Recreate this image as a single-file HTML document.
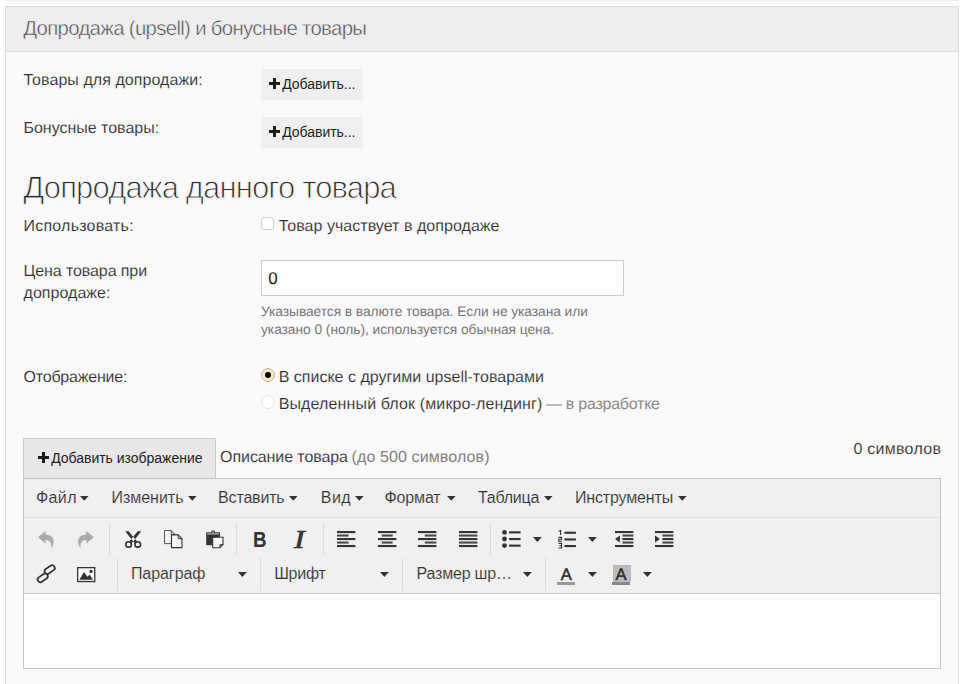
<!DOCTYPE html>
<html lang="ru">
<head>
<meta charset="utf-8">
<title>Допродажа (upsell) и бонусные товары</title>
<style>
html,body{margin:0;padding:0;background:#fff;}
body{width:965px;height:684px;position:relative;overflow:hidden;font-family:"Liberation Sans",sans-serif;}
.abs{position:absolute;box-sizing:border-box;}
.t{position:absolute;white-space:pre;line-height:20px;font-family:"Liberation Sans",sans-serif;}
.g{text-rendering:geometricPrecision;}
.panel{left:5px;top:6px;width:954px;height:700px;background:#fafafa;border:1px solid #ddd;}
.phead{left:5px;top:6px;width:954px;height:46px;background:#eee;border:1px solid #ddd;}
.btn{background:#efefef;}
.sep{width:1px;background:#dcdcdc;}
.caret{width:0;height:0;border-left:4px solid transparent;border-right:4px solid transparent;border-top:4px solid #333;}
svg{position:absolute;overflow:visible;}
</style>
</head>
<body>
<div class="abs" style="left:5px;top:0;width:954px;height:1px;background:#eee"></div>
<div class="abs panel"></div>
<div class="abs phead"></div>

<div class="abs btn" style="left:261px;top:69px;width:102px;height:31px"></div>
<div class="abs btn" style="left:261px;top:117px;width:102px;height:31px"></div>
<svg style="left:269px;top:78px" width="11" height="11" viewBox="0 0 11 11"><path d="M4 0h3v4h4v3H7v4H4V7H0V4h4z" fill="#1a1a1a"/></svg>
<svg style="left:269px;top:126px" width="11" height="11" viewBox="0 0 11 11"><path d="M4 0h3v4h4v3H7v4H4V7H0V4h4z" fill="#1a1a1a"/></svg>

<!-- checkbox -->
<div class="abs" style="left:261px;top:217px;width:13.4px;height:13.4px;border:1px solid #d0d0d0;border-radius:3px;background:#fff"></div>
<!-- input -->
<div class="abs" style="left:261px;top:260px;width:363px;height:36px;border:1px solid #ccc;background:#fff"></div>
<!-- radios -->
<div class="abs" style="left:261px;top:367.9px;width:14.1px;height:14.1px;border-radius:50%;border:1px solid #c4b89c;background:#f7e8c4"></div>
<div class="abs" style="left:264.7px;top:371.6px;width:6.6px;height:6.6px;border-radius:50%;background:#050505"></div>
<div class="abs" style="left:261px;top:394.8px;width:14.1px;height:14.1px;border-radius:50%;border:1px solid #e6e6e6;background:#fff"></div>

<!-- add image button -->
<div class="abs" style="left:23px;top:438px;width:193px;height:41px;border:1px solid #ccc;background:#e8e8e8"></div>
<svg style="left:37.8px;top:452.4px" width="11" height="11" viewBox="0 0 11 11"><path d="M4 0h3v4h4v3H7v4H4V7H0V4h4z" fill="#1a1a1a"/></svg>

<!-- editor -->
<div class="abs" style="left:23px;top:478px;width:918px;height:191px;border:1px solid #c5c5c5;background:#fff"></div>
<div class="abs" style="left:24px;top:479px;width:916px;height:39px;background:#f0f0f0;border-bottom:1px solid #e0e0e0"></div>
<div class="abs" style="left:24px;top:518px;width:916px;height:76px;background:#f0f0f0;border-bottom:1px solid #c5c5c5"></div>


<!-- menu carets -->
<svg style="left:80.4px;top:496.2px" width="8.6" height="4.8" viewBox="0 0 8.6 4.6"><path d="M0 0h8.6L4.3 4.6z" fill="#333"/></svg>
<svg style="left:188px;top:496.2px" width="8.6" height="4.8" viewBox="0 0 8.6 4.6"><path d="M0 0h8.6L4.3 4.6z" fill="#333"/></svg>
<svg style="left:289px;top:496.2px" width="8.6" height="4.8" viewBox="0 0 8.6 4.6"><path d="M0 0h8.6L4.3 4.6z" fill="#333"/></svg>
<svg style="left:355px;top:496.2px" width="8.6" height="4.8" viewBox="0 0 8.6 4.6"><path d="M0 0h8.6L4.3 4.6z" fill="#333"/></svg>
<svg style="left:446.6px;top:496.2px" width="8.6" height="4.8" viewBox="0 0 8.6 4.6"><path d="M0 0h8.6L4.3 4.6z" fill="#333"/></svg>
<svg style="left:543.6px;top:496.2px" width="8.6" height="4.8" viewBox="0 0 8.6 4.6"><path d="M0 0h8.6L4.3 4.6z" fill="#333"/></svg>
<svg style="left:677.5px;top:496.2px" width="8.6" height="4.8" viewBox="0 0 8.6 4.6"><path d="M0 0h8.6L4.3 4.6z" fill="#333"/></svg>

<!-- toolbar separators -->
<div class="abs sep" style="left:109px;top:523px;height:33px"></div>
<div class="abs sep" style="left:236px;top:523px;height:33px"></div>
<div class="abs sep" style="left:323px;top:523px;height:33px"></div>
<div class="abs sep" style="left:490px;top:523px;height:33px"></div>
<div class="abs sep" style="left:117px;top:558px;height:33px"></div>
<div class="abs sep" style="left:260px;top:558px;height:33px"></div>
<div class="abs sep" style="left:402px;top:558px;height:33px"></div>
<div class="abs sep" style="left:545px;top:558px;height:33px"></div>

<!-- toolbar carets -->
<svg style="left:533.3px;top:537px" width="8.8" height="4.9" viewBox="0 0 8.8 4.9"><path d="M0 0h8.8L4.4 4.9z" fill="#333"/></svg>
<svg style="left:588.2px;top:537px" width="8.8" height="4.9" viewBox="0 0 8.8 4.9"><path d="M0 0h8.8L4.4 4.9z" fill="#333"/></svg>
<svg style="left:237.6px;top:571.8px" width="8.8" height="4.9" viewBox="0 0 8.8 4.9"><path d="M0 0h8.8L4.4 4.9z" fill="#333"/></svg>
<svg style="left:380.3px;top:571.8px" width="8.8" height="4.9" viewBox="0 0 8.8 4.9"><path d="M0 0h8.8L4.4 4.9z" fill="#333"/></svg>
<svg style="left:523.3px;top:571.8px" width="8.8" height="4.9" viewBox="0 0 8.8 4.9"><path d="M0 0h8.8L4.4 4.9z" fill="#333"/></svg>
<svg style="left:588.2px;top:571.8px" width="8.8" height="4.9" viewBox="0 0 8.8 4.9"><path d="M0 0h8.8L4.4 4.9z" fill="#333"/></svg>
<svg style="left:643.2px;top:571.8px" width="8.8" height="4.9" viewBox="0 0 8.8 4.9"><path d="M0 0h8.8L4.4 4.9z" fill="#333"/></svg>

<!-- undo / redo -->
<svg style="left:38px;top:530.5px" width="16" height="18" viewBox="0 0 16 18"><path d="M0 6.3 L7.6 0 V3.6 C12.4 3.6 15.7 6.6 15.7 10.6 C15.7 13.2 14.6 15.6 13 17.4 C13.6 15.2 13.5 12.9 12.3 11.3 C11.2 9.6 9.6 8.9 7.6 8.8 V12.4 Z" fill="#aaa"/></svg>
<svg style="left:78.3px;top:530.5px" width="16" height="18" viewBox="0 0 16 18"><path transform="translate(15.8 0) scale(-1 1)" d="M0 6.3 L7.6 0 V3.6 C12.4 3.6 15.7 6.6 15.7 10.6 C15.7 13.2 14.6 15.6 13 17.4 C13.6 15.2 13.5 12.9 12.3 11.3 C11.2 9.6 9.6 8.9 7.6 8.8 V12.4 Z" fill="#aaa"/></svg>

<!-- cut -->
<svg style="left:124.5px;top:531.3px" width="16.4" height="17" viewBox="0 0 16.4 17">
<path d="M0.2 0.2 L3.6 0.2 L12.2 10.6 L10 12.2 L7.4 9.4 Z M16.2 0.2 L12.8 0.2 L4.2 10.6 L6.4 12.2 L9 9.4 Z" fill="#333"/>
<ellipse cx="3.6" cy="13.4" rx="2.8" ry="2.7" fill="none" stroke="#333" stroke-width="1.6"/>
<ellipse cx="12.8" cy="13.4" rx="2.8" ry="2.7" fill="none" stroke="#333" stroke-width="1.6"/>
</svg>

<!-- copy -->
<svg style="left:164px;top:530px" width="19" height="18.5" viewBox="0 0 19 18.5">
<path d="M0.5 0.5 H7.2 L11 4.3 V13.6 H0.5 Z" fill="#f4f4f4" stroke="#555" stroke-width="1"/>
<path d="M7.2 0.5 V4.3 H11" fill="none" stroke="#555" stroke-width="1"/>
<path d="M7.5 4.9 H14.2 L18 8.7 V17.6 H7.5 Z" fill="#fafafa" stroke="#333" stroke-width="1.1"/>
<path d="M14.2 4.9 V8.7 H18" fill="none" stroke="#333" stroke-width="1"/>
</svg>

<!-- paste -->
<svg style="left:205.5px;top:530px" width="18" height="18.5" viewBox="0 0 18 18.5">
<rect x="0.2" y="2.2" width="13.8" height="13" fill="#333"/>
<path d="M1.2 2.6 H13 V4.6 H1.2 Z" fill="#999"/>
<path d="M5.6 2.4 C5.6 0.2 8.6 0.2 8.6 2.4" fill="none" stroke="#333" stroke-width="1.1"/>
<path d="M6.7 7.2 H17 V14.6 L13.9 17.7 H6.7 Z" fill="#fafafa" stroke="#333" stroke-width="1.1"/>
<path d="M17 14.6 H13.9 V17.7" fill="none" stroke="#333" stroke-width="1"/>
</svg>

<!-- align left -->
<svg style="left:337.2px;top:531px" width="18.4" height="16.2" viewBox="0 0 18.4 16.2">
<g fill="#333"><rect x="0" y="0" width="18.4" height="2.1"/><rect x="0" y="7" width="18.4" height="2.1"/><rect x="0" y="14" width="18.4" height="2.1"/></g>
<g fill="#4a4a4a"><rect x="0" y="3.5" width="11.6" height="2.1"/><rect x="0" y="10.5" width="11.6" height="2.1"/></g>
</svg>
<!-- align center -->
<svg style="left:377.7px;top:531px" width="18.4" height="16.2" viewBox="0 0 18.4 16.2">
<g fill="#333"><rect x="0" y="0" width="18.4" height="2.1"/><rect x="0" y="7" width="18.4" height="2.1"/><rect x="0" y="14" width="18.4" height="2.1"/></g>
<g fill="#4a4a4a"><rect x="3.7" y="3.5" width="11" height="2.1"/><rect x="3.7" y="10.5" width="11" height="2.1"/></g>
</svg>
<!-- align right -->
<svg style="left:418.2px;top:531px" width="18.4" height="16.2" viewBox="0 0 18.4 16.2">
<g fill="#333"><rect x="0" y="0" width="18.4" height="2.1"/><rect x="0" y="7" width="18.4" height="2.1"/><rect x="0" y="14" width="18.4" height="2.1"/></g>
<g fill="#4a4a4a"><rect x="6.8" y="3.5" width="11.6" height="2.1"/><rect x="6.8" y="10.5" width="11.6" height="2.1"/></g>
</svg>
<!-- justify -->
<svg style="left:458.7px;top:531px" width="18.4" height="16.2" viewBox="0 0 18.4 16.2">
<g fill="#333"><rect x="0" y="0" width="18.4" height="2.1"/><rect x="0" y="7" width="18.4" height="2.1"/><rect x="0" y="14" width="18.4" height="2.1"/></g>
<g fill="#4a4a4a"><rect x="0" y="3.5" width="18.4" height="2.1"/><rect x="0" y="10.5" width="18.4" height="2.1"/></g>
</svg>

<!-- bullet list -->
<svg style="left:502.3px;top:530px" width="18.6" height="18" viewBox="0 0 18.6 18">
<g fill="#333"><circle cx="2.5" cy="2.4" r="2.4"/><circle cx="2.5" cy="9" r="2.4"/><circle cx="2.5" cy="15.6" r="2.4"/>
<rect x="7" y="1.3" width="11.6" height="2.1"/><rect x="7" y="8" width="11.6" height="2.1"/><rect x="7" y="14.6" width="11.6" height="2.1"/></g>
</svg>
<!-- numbered list -->
<svg style="left:558.2px;top:529.6px" width="18" height="19" viewBox="0 0 18 19">
<g fill="#333"><rect x="6.4" y="1.7" width="11.5" height="2.1"/><rect x="6.4" y="8.4" width="11.5" height="2.1"/><rect x="6.4" y="15" width="11.5" height="2.1"/></g>
<g fill="none" stroke="#333" stroke-width="1.1"><path d="M0.6 1.2 L2.6 0.6 V5"/><path d="M0.5 7.4 H3.6 V9.2 H0.8 V11.2 H4"/><path d="M0.5 13.4 H3.6 V18 H0.5 M1.4 15.7 H3.6"/></g>
</svg>
<!-- outdent -->
<svg style="left:614.9px;top:531px" width="18.4" height="16.2" viewBox="0 0 18.4 16.2">
<g fill="#333"><rect x="0" y="0" width="18.4" height="2.1"/><rect x="0" y="14" width="18.4" height="2.1"/><rect x="7.4" y="7" width="11" height="2.1"/><path d="M4.9 4.6 V11.6 L0 8.1 Z"/></g>
<g fill="#4a4a4a"><rect x="7.4" y="3.5" width="11" height="2.1"/><rect x="7.4" y="10.5" width="11" height="2.1"/></g>
</svg>
<!-- indent -->
<svg style="left:655.3px;top:531px" width="18.4" height="16.2" viewBox="0 0 18.4 16.2">
<g fill="#333"><rect x="0" y="0" width="18.4" height="2.1"/><rect x="0" y="14" width="18.4" height="2.1"/><rect x="7.4" y="7" width="11" height="2.1"/><path d="M0 4.6 V11.6 L4.9 8.1 Z"/></g>
<g fill="#4a4a4a"><rect x="7.4" y="3.5" width="11" height="2.1"/><rect x="7.4" y="10.5" width="11" height="2.1"/></g>
</svg>

<!-- link -->
<svg style="left:0px;top:0px" width="100" height="600" viewBox="0 0 100 600">
<g fill="none" stroke="#333" stroke-width="1.7">
<rect transform="translate(49.7 569.6) rotate(-35)" x="-5.6" y="-2.7" width="11.2" height="5.4" rx="2.7"/>
<rect transform="translate(42.7 577.9) rotate(-35)" x="-5.6" y="-2.7" width="11.2" height="5.4" rx="2.7"/>
</g>
</svg>
<!-- image -->
<svg style="left:77px;top:567px" width="18.4" height="15.2" viewBox="0 0 18.4 15.2">
<rect x="0.65" y="0.65" width="17.1" height="13.9" fill="#fafafa" stroke="#333" stroke-width="1.3"/>
<path d="M2.4 12.8 L6.9 4.9 L10.5 9.8 L12.6 7.6 L16 12.8 Z" fill="#333"/>
<circle cx="14" cy="4.4" r="1.6" fill="#333"/>
</svg>

<!-- text color -->
<div class="abs" style="left:557px;top:582px;width:18px;height:3px;background:#999"></div>
<!-- bg color -->
<div class="abs" style="left:613px;top:565px;width:18px;height:17.4px;background:#bbb"></div>
<div class="abs" style="left:612px;top:582.3px;width:18px;height:2.8px;background:#888"></div>

<!-- bold / italic -->
<div class="t" id="icoB" style="left:252.9px;top:525.2px;line-height:28px;font-size:22.9px;font-weight:700;color:#333;transform-origin:0 0;transform:scaleX(0.82)">B</div>
<div class="t" id="icoI" style="left:293.8px;top:524.9px;line-height:30px;font-family:'Liberation Serif',serif;font-size:25px;font-weight:400;font-style:italic;color:#333;-webkit-text-stroke:0.55px #333;transform-origin:0 0;transform:scaleX(1.28)">I</div>

<div class="t g" style="left:23.2px;top:18.8px;font-size:20.4px;color:#454545;letter-spacing:-0.688px;font-weight:400;-webkit-text-stroke:0.5px #eee">Допродажа (upsell) и бонусные товары</div>
<div class="t g" style="left:23.5px;top:70.8px;font-size:16px;color:#2e2e2e;letter-spacing:0.063px;font-weight:400;-webkit-text-stroke:0.12px #fafafa">Товары для допродажи:</div>
<div class="t g" style="left:23.5px;top:118.7px;font-size:16px;color:#2e2e2e;letter-spacing:-0.016px;font-weight:400;-webkit-text-stroke:0.12px #fafafa">Бонусные товары:</div>
<div class="t" style="left:282.2px;top:74.0px;font-size:14px;color:#222;letter-spacing:-0.025px;font-weight:400;">Добавить...</div>
<div class="t" style="left:282.2px;top:122.0px;font-size:14px;color:#222;letter-spacing:-0.025px;font-weight:400;">Добавить...</div>
<div class="t g" style="left:23.3px;top:177.9px;font-size:31px;color:#2c2c2c;letter-spacing:-0.861px;font-weight:400;-webkit-text-stroke:0.9px #fafafa">Допродажа данного товара</div>
<div class="t g" style="left:23.5px;top:216.8px;font-size:16px;color:#2e2e2e;letter-spacing:0.223px;font-weight:400;-webkit-text-stroke:0.12px #fafafa">Использовать:</div>
<div class="t g" style="left:278.7px;top:216.8px;font-size:16px;color:#2e2e2e;letter-spacing:0.039px;font-weight:400;-webkit-text-stroke:0.12px #fafafa">Товар участвует в допродаже</div>
<div class="t g" style="left:23.5px;top:262.2px;font-size:16px;color:#2e2e2e;letter-spacing:-0.094px;font-weight:400;-webkit-text-stroke:0.12px #fafafa">Цена товара при</div>
<div class="t g" style="left:23.5px;top:284.2px;font-size:16px;color:#2e2e2e;letter-spacing:0.042px;font-weight:400;-webkit-text-stroke:0.12px #fafafa">допродаже:</div>
<div class="t g" style="left:268.3px;top:269.3px;font-size:17px;color:#222;letter-spacing:0.000px;font-weight:400;">0</div>
<div class="t g" style="left:261.0px;top:302.3px;font-size:13.8px;color:#777;letter-spacing:-0.069px;font-weight:400;">Указывается в валюте товара. Если не указана или</div>
<div class="t g" style="left:261.0px;top:320.3px;font-size:13.8px;color:#777;letter-spacing:-0.055px;font-weight:400;">указано 0 (ноль), используется обычная цена.</div>
<div class="t g" style="left:23.5px;top:368.4px;font-size:16px;color:#2e2e2e;letter-spacing:-0.197px;font-weight:400;-webkit-text-stroke:0.12px #fafafa">Отображение:</div>
<div class="t g" style="left:278.7px;top:368.4px;font-size:16px;color:#2e2e2e;letter-spacing:0.005px;font-weight:400;-webkit-text-stroke:0.12px #fafafa">В списке с другими upsell-товарами</div>
<div class="t g" style="left:278.7px;top:395.3px;font-size:16px;color:#2e2e2e;letter-spacing:0.130px;font-weight:400;-webkit-text-stroke:0.12px #fafafa">Выделенный блок (микро-лендинг)</div>
<div class="t g" style="left:545.9px;top:395.3px;font-size:16px;color:#8a8a8a;letter-spacing:-0.244px;font-weight:400;">— в разработке</div>
<div class="t" style="left:51.2px;top:448.1px;font-size:14px;color:#222;letter-spacing:-0.022px;font-weight:400;">Добавить изображение</div>
<div class="t g" style="left:220.1px;top:447.5px;font-size:16px;color:#2e2e2e;letter-spacing:-0.087px;font-weight:400;-webkit-text-stroke:0.12px #fafafa">Описание товара</div>
<div class="t g" style="left:351.6px;top:447.5px;font-size:16px;color:#808080;letter-spacing:0.106px;font-weight:400;">(до 500 символов)</div>
<div class="t g" style="left:853.4px;top:439.5px;font-size:16px;color:#2e2e2e;letter-spacing:0.271px;font-weight:400;-webkit-text-stroke:0.12px #fafafa">0 символов</div>
<div class="t" style="left:36.0px;top:488.1px;font-size:16px;color:#333;letter-spacing:0.385px;font-weight:400;-webkit-text-stroke:0.12px #f0f0f0">Файл</div>
<div class="t" style="left:111.4px;top:488.1px;font-size:16px;color:#333;letter-spacing:-0.010px;font-weight:400;-webkit-text-stroke:0.12px #f0f0f0">Изменить</div>
<div class="t" style="left:218.1px;top:488.1px;font-size:16px;color:#333;letter-spacing:-0.175px;font-weight:400;-webkit-text-stroke:0.12px #f0f0f0">Вставить</div>
<div class="t" style="left:320.7px;top:488.1px;font-size:16px;color:#333;letter-spacing:0.523px;font-weight:400;-webkit-text-stroke:0.12px #f0f0f0">Вид</div>
<div class="t" style="left:384.6px;top:488.1px;font-size:16px;color:#333;letter-spacing:-0.149px;font-weight:400;-webkit-text-stroke:0.12px #f0f0f0">Формат</div>
<div class="t" style="left:477.9px;top:488.1px;font-size:16px;color:#333;letter-spacing:-0.189px;font-weight:400;-webkit-text-stroke:0.12px #f0f0f0">Таблица</div>
<div class="t" style="left:574.9px;top:488.1px;font-size:16px;color:#333;letter-spacing:-0.147px;font-weight:400;-webkit-text-stroke:0.12px #f0f0f0">Инструменты</div>
<div class="t" style="left:130.9px;top:563.5px;font-size:16px;color:#333;letter-spacing:-0.057px;font-weight:400;-webkit-text-stroke:0.12px #f0f0f0">Параграф</div>
<div class="t" style="left:274.2px;top:563.5px;font-size:16px;color:#333;letter-spacing:-0.260px;font-weight:400;-webkit-text-stroke:0.12px #f0f0f0">Шрифт</div>
<div class="t" style="left:416.6px;top:563.5px;font-size:16px;color:#333;letter-spacing:-0.208px;font-weight:400;-webkit-text-stroke:0.12px #f0f0f0">Размер шр…</div>
<div class="t g" style="left:560.8px;top:565.4px;font-size:16.6px;color:#2a2a2a;letter-spacing:0.000px;font-weight:400;-webkit-text-stroke:0.45px #2a2a2a">A</div>
<div class="t g" style="left:615.6px;top:565.4px;font-size:16.6px;color:#2a2a2a;letter-spacing:0.000px;font-weight:400;-webkit-text-stroke:0.45px #2a2a2a">A</div>

</body>
</html>
